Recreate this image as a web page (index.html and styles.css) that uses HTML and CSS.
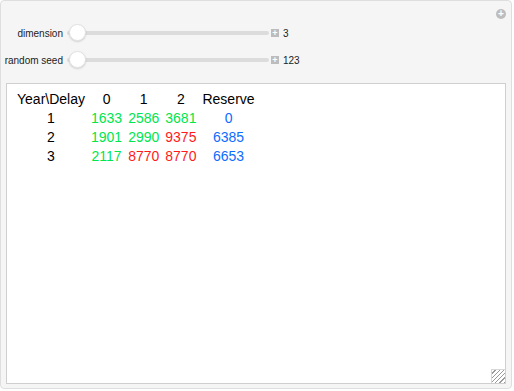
FILE: index.html
```html
<!DOCTYPE html>
<html lang="en">
<head>
  <meta charset="UTF-8">
  <title>Reserve table</title>
  <link rel="stylesheet" href="styles.css">
</head>
<body>
<div class="panel">
  <span class="corner-btn">+</span>
  <div class="controls">
    <div class="ctl">
      <span class="ctl-label">dimension</span>
      <div class="track"><span class="thumb"></span></div>
      <span class="plus">+</span>
      <span class="ctl-value">3</span>
    </div>
    <div class="ctl">
      <span class="ctl-label">random seed</span>
      <div class="track"><span class="thumb"></span></div>
      <span class="plus">+</span>
      <span class="ctl-value">123</span>
    </div>
  </div>
  <div class="output">
    <div class="grid">
      <span>Year\Delay</span><span>0</span><span>1</span><span>2</span><span>Reserve</span>
      <span>1</span><span class="g">1633</span><span class="g">2586</span><span class="g">3681</span><span class="b">0</span>
      <span>2</span><span class="g">1901</span><span class="g">2990</span><span class="r">9375</span><span class="b">6385</span>
      <span>3</span><span class="g">2117</span><span class="r">8770</span><span class="r">8770</span><span class="b">6653</span>
    </div>
    <span class="grip"></span>
  </div>
</div>
</body>
</html>
```

FILE: styles.css
```css
body {
  margin: 0;
  font-family: "Liberation Sans", Arial, sans-serif;
}

.panel {
  position: relative;
  width: 512px;
  height: 389px;
  box-sizing: border-box;
  background-color: #f5f5f5;
  border: 1px solid #dedede;
  border-radius: 4px;
  padding: 24px 5px 5px 5px;
}

.corner-btn {
  position: absolute;
  top: 8px;
  right: 5px;
  width: 10px;
  height: 10px;
  border-radius: 50%;
  background-color: #bdbdbd;
  color: #fff;
  font-size: 10px;
  font-weight: bold;
  line-height: 10px;
  text-align: center;
}

.controls {
  display: flex;
  flex-direction: column;
  gap: 11px;
}

.ctl {
  display: flex;
  align-items: center;
  height: 16px;
  font-size: 10px;
  color: #222;
  white-space: nowrap;
}

.ctl-label {
  display: flex;
  justify-content: flex-end;
  flex-shrink: 0;
  width: 57px;
  margin-right: 4px;
}

.track {
  position: relative;
  flex-shrink: 0;
  width: 202px;
  height: 4px;
  border-radius: 2px;
  background-color: #dcdcdc;
}

.thumb {
  position: absolute;
  left: 2px;
  top: -7px;
  width: 17px;
  height: 17px;
  box-sizing: border-box;
  border-radius: 50%;
  background-color: #fff;
  border: 1px solid #e2e2e2;
  box-shadow: 0 1px 2px rgba(0, 0, 0, 0.15);
}

.plus {
  width: 8px;
  height: 8px;
  margin-left: 2px;
  background-color: #bcbcbc;
  color: #fff;
  font-size: 9px;
  font-weight: bold;
  line-height: 8px;
  text-align: center;
}

.ctl-value {
  margin-left: 4px;
}

.output {
  position: relative;
  margin-top: 15px;
  height: 301px;
  box-sizing: border-box;
  background-color: #fff;
  border: 1px solid #cfcfcf;
  padding: 6px 0 0 10px;
}

.grid {
  display: inline-grid;
  grid-template-columns: repeat(5, auto);
  column-gap: 6px;
  justify-items: center;
  font-size: 14px;
  line-height: 19px;
  color: #000;
}

.g { color: #00e64d; }
.r { color: #ff1a1a; }
.b { color: #0d6cff; }

.grip {
  position: absolute;
  right: 0;
  bottom: 0;
  width: 14px;
  height: 14px;
  box-sizing: border-box;
  border-left: 1px solid #d8d8d8;
  border-top: 1px solid #d8d8d8;
  background: repeating-linear-gradient(135deg, #fff 0 2px, #9a9a9a 2px 3px);
}
```
